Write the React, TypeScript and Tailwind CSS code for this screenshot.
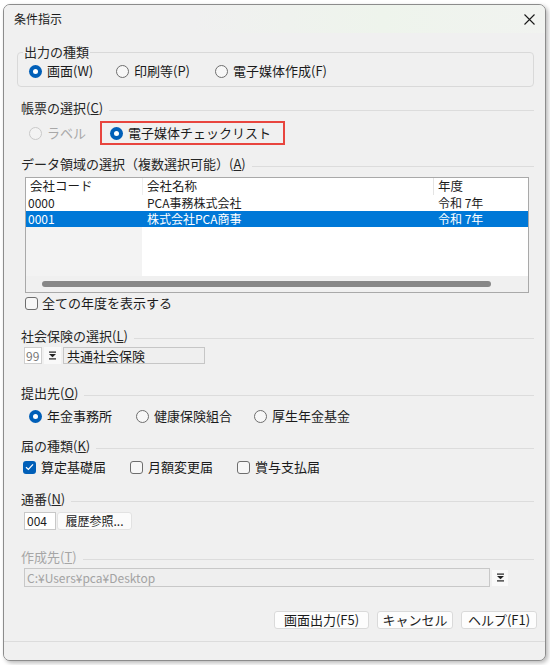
import React from "react";

const FONT = "font-['Noto_Sans_CJK_JP','Noto_Sans',sans-serif]";

function Radio({ checked, disabled }: { checked?: boolean; disabled?: boolean }) {
  if (checked)
    return (
      <span className="w-[13px] h-[13px] rounded-full bg-[#005fb8] flex items-center justify-center shrink-0">
        <span className="w-[5px] h-[5px] rounded-full bg-white" />
      </span>
    );
  return (
    <span
      className={
        disabled
          ? "w-[13px] h-[13px] rounded-full border border-[#c9c9c9] bg-[#f3f3f3] shrink-0"
          : "w-[13px] h-[13px] rounded-full border border-[#6e6e6e] bg-[#f7f7f7] shrink-0"
      }
    />
  );
}

function Check({ checked }: { checked?: boolean }) {
  if (checked)
    return (
      <span className="w-[13px] h-[13px] rounded-[3px] bg-[#005fb8] flex items-center justify-center shrink-0">
        <svg width="9" height="8" viewBox="0 0 9 8">
          <path d="M1 4.2 L3.4 6.4 L8 1.4" fill="none" stroke="white" strokeWidth="1.3" />
        </svg>
      </span>
    );
  return <span className="w-[13px] h-[13px] rounded-[3px] border border-[#6e6e6e] bg-[#f7f7f7] shrink-0" />;
}

function Section({
  children,
  disabled,
  className = "",
}: {
  children: React.ReactNode;
  disabled?: boolean;
  className?: string;
}) {
  return (
    <div className={`flex items-center h-[16px] ${className}`}>
      <span
        className={`ml-[4px] text-[13px] leading-[16px] whitespace-nowrap ${
          disabled ? "text-[#a6a6a6]" : "text-[#262626]"
        }`}
      >
        {children}
      </span>
      <div className="flex-1 ml-[6px] mt-[4px] border-t border-[#dcdcdc]" />
    </div>
  );
}

function DropIcon() {
  return (
    <svg width="9" height="9" viewBox="0 0 9 9">
      <rect x="1" y="0.5" width="7" height="1.2" fill="#222" />
      <path d="M1 3 L8 3 L4.5 6.3 Z" fill="#222" />
      <rect x="1" y="7.3" width="7" height="1.2" fill="#222" />
    </svg>
  );
}

export default function App() {
  return (
    <div className={`w-[550px] h-[665px] bg-white overflow-hidden ${FONT} text-[#1b1b1b]`}>
      <div className="ml-[3px] mt-[4px] w-[543px] h-[657px] border border-[#8c8c8c] rounded-[7px] bg-[#f0f0f0] overflow-hidden shadow-[2px_2px_4px_rgba(0,0,0,0.28)] flex flex-col">
        {/* Title bar */}
        <div className="h-[28px] flex items-center justify-between pl-[10px] pr-[10px] bg-[linear-gradient(90deg,#f0f0f0_35%,#eef4ec_70%,#f1f3f0)]">
          <span className="text-[12px] leading-[16px] text-[#1a1a1a]">条件指示</span>
          <svg width="11" height="11" viewBox="0 0 11 11">
            <path d="M0.5 0.5 L10.5 10.5 M10.5 0.5 L0.5 10.5" stroke="#1a1a1a" strokeWidth="1.1" />
          </svg>
        </div>

        {/* Body */}
        <div className="flex flex-col pl-[13px] pr-[11px] text-[13px] leading-[16px]">
          {/* 出力の種類 */}
          <fieldset className="mt-[11px] border border-[#d9d9d9] rounded-[4px]">
            <legend className="ml-[5px] px-[1px] text-[13px] leading-[16px] text-[#262626]">出力の種類</legend>
            <div className="flex items-center h-[22px] pl-[11px] mb-[4px]">
              <div className="w-[87px] flex items-center gap-[5px]">
                <Radio checked />
                <span>画面(W)</span>
              </div>
              <div className="w-[99px] flex items-center gap-[5px]">
                <Radio />
                <span>印刷等(P)</span>
              </div>
              <div className="flex items-center gap-[5px]">
                <Radio />
                <span>電子媒体作成(F)</span>
              </div>
            </div>
          </fieldset>

          {/* 帳票の選択 */}
          <Section className="mt-[13px]">
            帳票の選択(<u>C</u>)
          </Section>
          <div className="mt-[5px] h-[24px] flex items-center">
            <div className="ml-[12px] w-[71px] flex items-center gap-[5px] text-[#a8a8a8]">
              <Radio disabled />
              <span>ラベル</span>
            </div>
            <div className="w-[185px] h-[24px] border-2 border-[#e8453e] flex items-center pl-[8px] gap-[5px]">
              <Radio checked />
              <span>電子媒体チェックリスト</span>
            </div>
          </div>

          {/* データ領域 */}
          <Section className="mt-[11px]">
            データ領域の選択（複数選択可能）(<u>A</u>)
          </Section>
          <div className="mt-[5px] ml-[8px] mr-[5px] h-[116px] border border-[#a9a9a9] bg-white flex flex-col text-[12px]">
            <div className="h-[17px] flex text-[12.5px] leading-[16px]">
              <div className="w-[116px] pl-[4px] bg-white">会社コード</div>
              <div className="w-[291px] pl-[4px] border-l border-[#eeeeee]">会社名称</div>
              <div className="flex-1 pl-[4px] border-l border-[#e4e4e4]">年度</div>
            </div>
            <div className="h-[16px] flex leading-[16px]">
              <div className="w-[116px] pl-[2px]">0000</div>
              <div className="w-[291px] pl-[5px]">PCA事務株式会社</div>
              <div className="flex-1 pl-[5px]">令和 7年</div>
            </div>
            <div className="h-[16px] flex leading-[16px] bg-[#0078d7] text-white">
              <div className="w-[116px] pl-[2px]">0001</div>
              <div className="w-[291px] pl-[5px]">株式会社PCA商事</div>
              <div className="flex-1 pl-[5px]">令和 7年</div>
            </div>
            <div className="flex-1 flex">
              <div className="w-[116px] bg-[#f3f3f3]" />
              <div className="flex-1 bg-white" />
            </div>
            <div className="h-[16px] bg-[#f0f0f0] flex items-center">
              <div className="ml-[16px] w-[449px] h-[6px] rounded-full bg-[#878787]" />
            </div>
          </div>
          <div className="mt-[2px] h-[16px] flex items-center ml-[8px] gap-[4px]">
            <Check />
            <span>全ての年度を表示する</span>
          </div>

          {/* 社会保険 */}
          <Section className="mt-[17px]">
            社会保険の選択(<u>L</u>)
          </Section>
          <div className="mt-[3px] h-[17px] flex items-stretch ml-[7px]">
            <div className="w-[18px] border border-[#cfcfcf] bg-white text-[12px] leading-[15px] text-[#777] pl-[1px]">99</div>
            <div className="ml-[2px] w-[17px] bg-[#f9f9f9] flex items-center justify-center">
              <DropIcon />
            </div>
            <div className="ml-[2px] w-[142px] border border-[#c6c6c6] bg-[#efefef] leading-[15px] pl-[3px]">共通社会保険</div>
          </div>

          {/* 提出先 */}
          <Section className="mt-[21px]">
            提出先(<u>O</u>)
          </Section>
          <div className="mt-[5px] h-[20px] flex items-center ml-[12px]">
            <div className="w-[107px] flex items-center gap-[5px]">
              <Radio checked />
              <span>年金事務所</span>
            </div>
            <div className="w-[118px] flex items-center gap-[5px]">
              <Radio />
              <span>健康保険組合</span>
            </div>
            <div className="flex items-center gap-[5px]">
              <Radio />
              <span>厚生年金基金</span>
            </div>
          </div>

          {/* 届の種類 */}
          <Section className="mt-[12px]">
            届の種類(<u>K</u>)
          </Section>
          <div className="mt-[3px] h-[20px] flex items-center ml-[6px]">
            <div className="w-[107px] flex items-center gap-[5px]">
              <Check checked />
              <span>算定基礎届</span>
            </div>
            <div className="w-[107px] flex items-center gap-[5px]">
              <Check />
              <span>月額変更届</span>
            </div>
            <div className="flex items-center gap-[5px]">
              <Check />
              <span>賞与支払届</span>
            </div>
          </div>

          {/* 通番 */}
          <Section className="mt-[14px]">
            通番(<u>N</u>)
          </Section>
          <div className="mt-[5px] h-[18px] flex items-stretch ml-[7px]">
            <div className="w-[32px] border border-[#c8c8c8] bg-white text-[12px] leading-[16px] pl-[2px]">004</div>
            <div className="ml-[1px] w-[75px] border border-[#e2e2e2] rounded-[3px] bg-[#fbfbfb] text-[12px] leading-[16px] flex justify-center">
              履歴参照...
            </div>
          </div>

          {/* 作成先 */}
          <Section disabled className="mt-[19px]">
            作成先(<u>T</u>)
          </Section>
          <div className="mt-[3px] h-[19px] flex items-center ml-[7px]">
            <div className="w-[466px] h-[19px] border border-[#c8c8c8] bg-[#efefef] text-[12px] leading-[17px] text-[#a3a3a3] pl-[2px]">
              C:¥Users¥pca¥Desktop
            </div>
            <div className="ml-[2px] w-[16px] h-[16px] bg-[#f9f9f9] flex items-center justify-center">
              <DropIcon />
            </div>
          </div>

          {/* Buttons */}
          <div className="mt-[24px] h-[18px] flex justify-end mr-[-3px] gap-[8px]">
            <div className="w-[95px] border border-[#dadada] rounded-[3px] bg-[#fdfdfd] flex items-center justify-center text-[13px]">
              画面出力(F5)
            </div>
            <div className="w-[76px] border border-[#dadada] rounded-[3px] bg-[#fdfdfd] flex items-center justify-center text-[13px]">
              キャンセル
            </div>
            <div className="w-[76px] border border-[#dadada] rounded-[3px] bg-[#fdfdfd] flex items-center justify-center text-[13px]">
              ヘルプ(F1)
            </div>
          </div>
        </div>

        {/* Status */}
        <div className="mt-auto h-[19px] border-t border-[#dcdcdc] bg-[#f0f0f0]" />
      </div>
    </div>
  );
}
